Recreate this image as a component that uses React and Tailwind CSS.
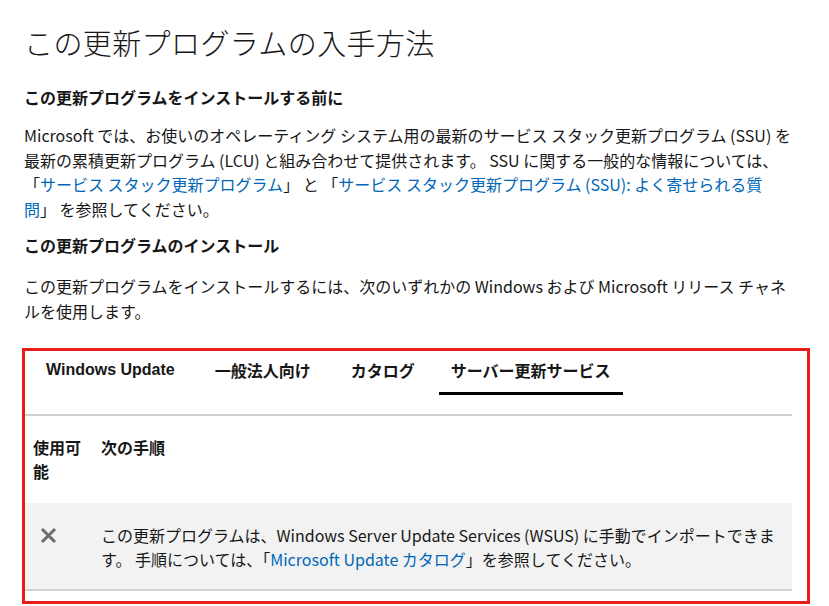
import React from "react";

const jp = { fontFamily: '"Noto Sans CJK JP", "Noto Sans", sans-serif' };

function Link({ children }) {
  return <a className="text-[#0067b8] cursor-pointer">{children}</a>;
}

function XMark() {
  return (
    <svg width="17" height="17" viewBox="0 0 17 17" className="block">
      <path d="M2 2 L15 15 M15 2 L2 15" stroke="#6b6b6b" strokeWidth="3" strokeLinecap="butt" />
    </svg>
  );
}

const tabs = ["Windows Update", "一般法人向け", "カタログ", "サーバー更新サービス"];

export default function App() {
  return (
    <div className="bg-white text-[#171717] w-[829px] h-[606px] overflow-hidden" style={jp}>
      <div className="pl-6 pr-[6px] pt-[20px]">
        <h1 className="text-[29px] font-light leading-[44px] tracking-[0.4px]">この更新プログラムの入手方法</h1>

        <h2 className="mt-[21px] text-[16px] font-bold leading-[24px]">この更新プログラムをインストールする前に</h2>
        <p className="mt-[14px] text-[16px] leading-[24.5px]">
          Microsoft では、お使いのオペレーティング システム用の最新のサービス スタック更新プログラム (SSU) を<br />
          最新の累積更新プログラム (LCU) と組み合わせて提供されます。 SSU に関する一般的な情報については、<br />
          「<Link>サービス スタック更新プログラム</Link>」 と 「<Link>サービス スタック更新プログラム (SSU): よく寄せられる質<br />問</Link>」 を参照してください。
        </p>

        <h2 className="mt-[12px] text-[16px] font-bold leading-[24px]">この更新プログラムのインストール</h2>
        <p className="mt-[17px] text-[16px] leading-[25px]">
          この更新プログラムをインストールするには、次のいずれかの Windows および Microsoft リリース チャネ<br />
          ルを使用します。
        </p>
      </div>

      <div className="ml-[22px] mt-[24px] w-[788px] border-[3px] border-[#e61e1e] pr-[15px]">
        <div className="flex border-b-2 border-[#d2d2d2] h-[65px]">
          {tabs.map((t, i) => (
            <div
              key={t}
              className={
                "px-[12px] pt-[7px] text-[16px] font-bold leading-[24px] h-[44px] " +
                (i === 0 ? "ml-[9px] " : i === 3 ? "ml-[12px] " : "ml-[16px] ") +
                (i === 3 ? "border-b-[3px] border-black" : "")
              }
              style={i === 0 ? { fontFamily: '"Liberation Sans", Arial, sans-serif' } : undefined}
            >
              {t}
            </div>
          ))}
        </div>

        <div className="flex pt-[19px] pb-[20px] text-[16px] font-bold leading-[24px]">
          <div className="w-[76px] pl-[8px] pr-[20px]">使用可能</div>
          <div>次の手順</div>
        </div>

        <div className="flex bg-[#f2f2f2] border-b-2 border-[#d2d2d2] pt-[20px] pb-[18px] text-[16px] leading-[24px]">
          <div className="w-[76px] pl-[15px] pt-[4px]">
            <XMark />
          </div>
          <div className="flex-1 whitespace-nowrap">
            この更新プログラムは、Windows Server Update Services (WSUS) に手動でインポートできま<br />
            す。 手順については、「<Link>Microsoft Update カタログ</Link>」を参照してください。
          </div>
        </div>
        <div className="h-[10px]"></div>
      </div>
    </div>
  );
}
